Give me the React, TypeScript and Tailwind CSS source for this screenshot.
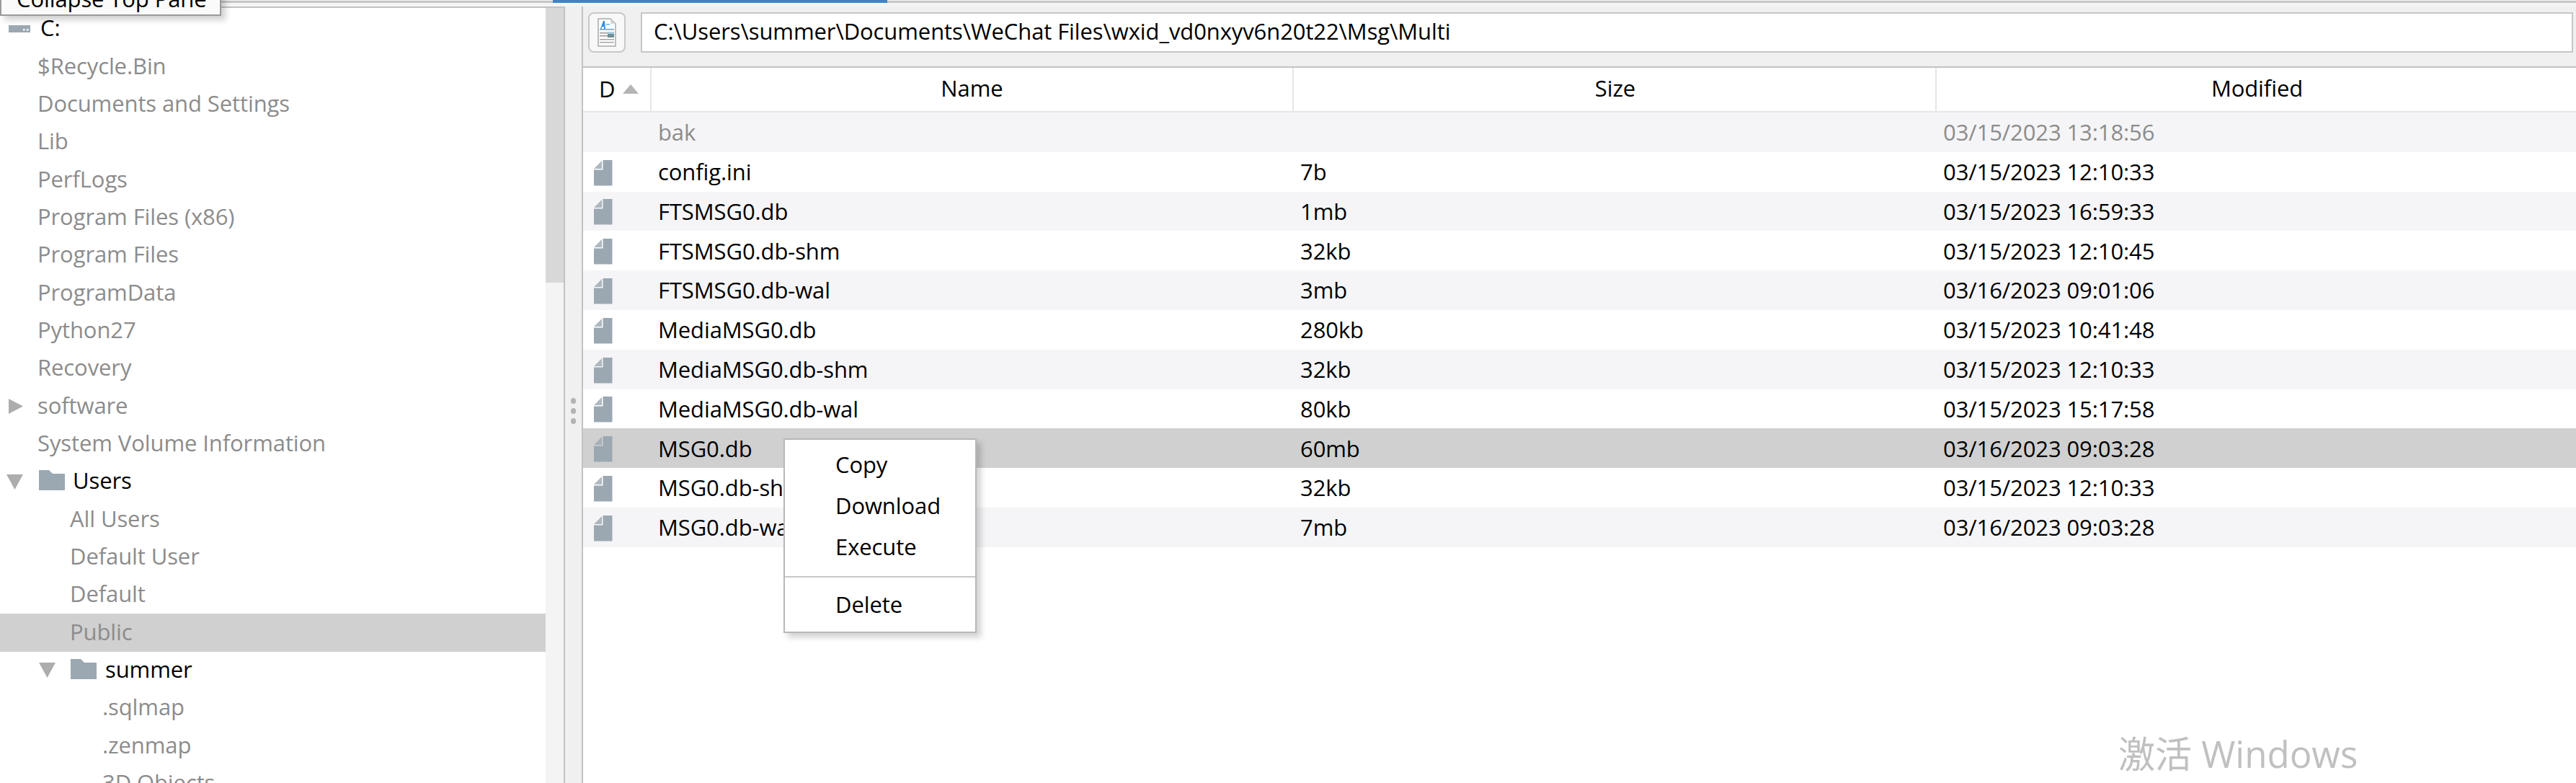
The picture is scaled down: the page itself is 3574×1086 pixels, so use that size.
const FONT = "font-['Open_Sans','Noto_Sans_CJK_SC',sans-serif]";

function FileIcon() {
  return (
    <svg width="26" height="36" viewBox="0 0 26 36" className="shrink-0">
      <path d="M12.500 0H25.500V35.500H0V13.500H12.500Z" fill="#9ba8b2" />
      <path d="M11 1V12H0Z" fill="#9ba8b2" opacity="0.8" />
    </svg>
  );
}

function Folder() {
  return (
    <svg width="36" height="28" viewBox="0 0 36 28" className="shrink-0">
      <path d="M0 0H14L19 5H36V28H0Z" fill="#9ba8b2" />
    </svg>
  );
}

function Down() {
  return (
    <svg width="23" height="21" viewBox="0 0 23 21" className="shrink-0">
      <path d="M0 0H23L11.500 21Z" fill="#adadad" />
    </svg>
  );
}

function Right() {
  return (
    <svg width="20" height="21" viewBox="0 0 20 21" className="shrink-0">
      <path d="M0 0L20 10.500L0 21Z" fill="#adadad" />
    </svg>
  );
}

function Drive() {
  return (
    <svg width="30" height="10" viewBox="0 0 30 10" className="shrink-0">
      <path d="M0 0H30V10H0Z" fill="#9ba8b2" />
      <rect x="20" y="5" width="2.500" height="2.500" fill="#fff" />
      <rect x="25" y="5" width="2.500" height="2.500" fill="#fff" />
    </svg>
  );
}

function DocIcon() {
  return (
    <svg width="26" height="40" viewBox="0 0 26 40">
      <path d="M1 1H18L25 8V39H1Z" fill="#fdfdfd" stroke="#a9a9a9" strokeWidth="1.500" />
      <path d="M18 1V8H25Z" fill="#d5d5d5" />
      <path d="M4 15L8 4H10L11 15H9L8.800 12H6.500L5.500 15Z" fill="#3f8fd8" />
      <rect x="12" y="8" width="5" height="1.500" fill="#6db0e6" />
      <rect x="3" y="15" width="20" height="1.500" fill="#55a5e6" />
      <rect x="3" y="20" width="11" height="1.500" fill="#9a9a9a" />
      <rect x="3" y="24" width="11" height="1.500" fill="#9a9a9a" />
      <rect x="14" y="19" width="9" height="8" fill="#6f8f94" />
      <rect x="14" y="19" width="9" height="3" fill="#a9cfe6" />
      <rect x="3" y="29" width="20" height="1.500" fill="#a5a5a5" />
      <rect x="3" y="33" width="20" height="1.500" fill="#a5a5a5" />
    </svg>
  );
}

const files: [string, string, string, boolean][] = [
  ["bak", "", "03/15/2023 13:18:56", true],
  ["config.ini", "7b", "03/15/2023 12:10:33", false],
  ["FTSMSG0.db", "1mb", "03/15/2023 16:59:33", false],
  ["FTSMSG0.db-shm", "32kb", "03/15/2023 12:10:45", false],
  ["FTSMSG0.db-wal", "3mb", "03/16/2023 09:01:06", false],
  ["MediaMSG0.db", "280kb", "03/15/2023 10:41:48", false],
  ["MediaMSG0.db-shm", "32kb", "03/15/2023 12:10:33", false],
  ["MediaMSG0.db-wal", "80kb", "03/15/2023 15:17:58", false],
  ["MSG0.db", "60mb", "03/16/2023 09:03:28", false],
  ["MSG0.db-shm", "32kb", "03/15/2023 12:10:33", false],
  ["MSG0.db-wal", "7mb", "03/16/2023 09:03:28", false],
];

function TreeRow({ children, className = "" }: { children: React.ReactNode; className?: string }) {
  return <div className={`h-[52.33px] shrink-0 flex items-center ${className}`}>{children}</div>;
}

function Label({ t, className = "" }: { t: string; className?: string }) {
  return <span className={`mb-[3px] ${className}`}>{t}</span>;
}

function Leaf1({ t }: { t: string }) {
  return <TreeRow className="pl-[52px] text-[#8c8c8c]"><Label t={t} /></TreeRow>;
}
function Leaf2({ t, active }: { t: string; active?: boolean }) {
  return <TreeRow className={`pl-[97px] text-[#8c8c8c] ${active ? "bg-[#d0d0d0]" : ""}`}><Label t={t} /></TreeRow>;
}
function Leaf3({ t }: { t: string }) {
  return <TreeRow className="pl-[142px] text-[#8c8c8c]"><Label t={t} /></TreeRow>;
}

export default function App() {
  return (
    <div className={`relative w-[3574px] h-[1086px] overflow-hidden bg-[#f0f0f0] text-[31px] tracking-[-0.1px] text-black ${FONT}`}>
      {/* top strip */}
      <div className="h-[9px] flex items-start bg-[#f4f4f4]">
        <div className="w-[767px] h-[3px] mt-px bg-[#c6c6c6]" />
        <div className="w-[464px] h-[4px] bg-[#3f83c6]" />
        <div className="flex-1 h-[3px] mt-px bg-[#c6c6c6]" />
      </div>

      <div className="flex h-[1077px]">
        {/* left tree pane */}
        <div className="w-[784px] flex border-t-2 border-r-2 border-[#c2c2c2]">
          <div className="w-[757px] bg-white pt-[3px] flex flex-col overflow-hidden">
            <TreeRow className="pl-[12px] text-black">
              <Drive />
              <Label t="C:" className="ml-[14px]" />
            </TreeRow>
            <Leaf1 t="$Recycle.Bin" />
            <Leaf1 t="Documents and Settings" />
            <Leaf1 t="Lib" />
            <Leaf1 t="PerfLogs" />
            <Leaf1 t="Program Files (x86)" />
            <Leaf1 t="Program Files" />
            <Leaf1 t="ProgramData" />
            <Leaf1 t="Python27" />
            <Leaf1 t="Recovery" />
            <TreeRow className="pl-[12px] text-[#8c8c8c]">
              <Right />
              <Label t="software" className="ml-[20px]" />
            </TreeRow>
            <Leaf1 t="System Volume Information" />
            <TreeRow className="pl-[9px]">
              <Down />
              <span className="ml-[22px] mb-[4px]"><Folder /></span>
              <Label t="Users" className="ml-[11px]" />
            </TreeRow>
            <Leaf2 t="All Users" />
            <Leaf2 t="Default User" />
            <Leaf2 t="Default" />
            <Leaf2 t="Public" active />
            <TreeRow className="pl-[54px]">
              <Down />
              <span className="ml-[21px] mb-[4px]"><Folder /></span>
              <Label t="summer" className="ml-[12px]" />
            </TreeRow>
            <Leaf3 t=".sqlmap" />
            <Leaf3 t=".zenmap" />
            <Leaf3 t="3D Objects" />
          </div>
          <div className="w-[25px] bg-[#f4f4f4]">
            <div className="h-[381px] bg-[#d8d8d8]" />
          </div>
        </div>

        {/* splitter */}
        <div className="w-[23px] flex flex-col items-center gap-[6px] pt-[543px]">
          <span className="w-[7px] h-[8px] rounded-full bg-[#b3b3b3]" />
          <span className="w-[7px] h-[8px] rounded-full bg-[#b3b3b3]" />
          <span className="w-[7px] h-[8px] rounded-full bg-[#b3b3b3]" />
        </div>

        {/* right pane */}
        <div className="flex-1 min-w-0 border-l-2 border-[#c2c2c2] flex flex-col">
          <div className="flex h-[56px] mt-[8px] pl-[7px] pr-[4px] gap-[21px]">
            <div className="w-[52px] h-[56px] rounded-[8px] border-2 border-[#c8c8c8] bg-[#f8f8f8] flex items-center justify-center">
              <DocIcon />
            </div>
            <div className="flex-1 border-2 border-[#c6c6c6] bg-white flex items-center pl-[16px] pb-[4px]">
              C:\Users\summer\Documents\WeChat Files\wxid_vd0nxyv6n20t22\Msg\Multi
            </div>
          </div>

          <div className="mt-[19px] flex-1 bg-white border-t-2 border-[#c2c2c2]">
            <div className="h-[62px] grid grid-cols-[95px_891px_892px_1fr] border-b-2 border-[#e6e6e6]">
              <div className="flex items-center pl-[22px] pb-[2px] border-r-2 border-[#e6e6e6]">
                <span>D</span>
                <svg width="22" height="13" viewBox="0 0 22 13" className="ml-[11px]">
                  <path d="M11 0L22 13H0Z" fill="#b5b5b5" />
                </svg>
              </div>
              <div className="flex items-center justify-center pb-[3px] border-r-2 border-[#e6e6e6]">Name</div>
              <div className="flex items-center justify-center pb-[3px] pl-[2px] border-r-2 border-[#e6e6e6]">Size</div>
              <div className="flex items-center justify-center pb-[3px] pl-[2px]">Modified</div>
            </div>
            {files.map(([name, size, mod, dir], i) => (
              <div
                key={name}
                className={`h-[54.8px] grid grid-cols-[95px_891px_892px_1fr] items-center ${
                  name === "MSG0.db" ? "bg-[#d0d0d0]" : i % 2 === 0 ? "bg-[#f5f5f7]" : "bg-white"
                } ${dir ? "text-[#8c8c8c]" : "text-black"}`}
              >
                <div className="pl-[15px] flex items-center pt-[3px]">{dir ? null : <FileIcon />}</div>
                <div className="pl-[9px]">{name}</div>
                <div className="pl-[9px]">{size}</div>
                <div className="pl-[9px]">{mod}</div>
              </div>
            ))}
          </div>
        </div>
      </div>

      {/* tooltip */}
      <div className="absolute left-0 top-[-30px] w-[307px] h-[52px] bg-[#fafafa] border-2 border-[#9a9a9a] shadow-[6px_6px_8px_rgba(0,0,0,0.18)] pl-[21px] pt-[3px] whitespace-nowrap">
        Collapse Top Pane
      </div>

      {/* context menu */}
      <div className="absolute left-[1087px] top-[608px] w-[268px] h-[270px] bg-white border-2 border-[#b8b8b8] shadow-[6px_6px_8px_rgba(0,0,0,0.18)] pt-[6px] pb-[7px]">
        <div className="h-[57px] flex items-center pl-[70px]">Copy</div>
        <div className="h-[57px] flex items-center pl-[70px]">Download</div>
        <div className="h-[57px] flex items-center pl-[70px]">Execute</div>
        <div className="h-[2px] mt-[12px] mb-[9px] bg-[#c8c8c8]" />
        <div className="h-[57px] flex items-center pl-[70px]">Delete</div>
      </div>

      {/* activation watermark */}
      <div className="absolute left-[2939px] top-[1011px] text-[51px] leading-[68px] tracking-normal text-[#c0c0c0] whitespace-nowrap">
        激活 Windows
      </div>
      <div className="absolute left-[2941px] top-[1080px] text-[28px] tracking-normal text-[#c8c8c8] whitespace-nowrap">
        转到“设置”以激活 Windows。
      </div>
    </div>
  );
}
